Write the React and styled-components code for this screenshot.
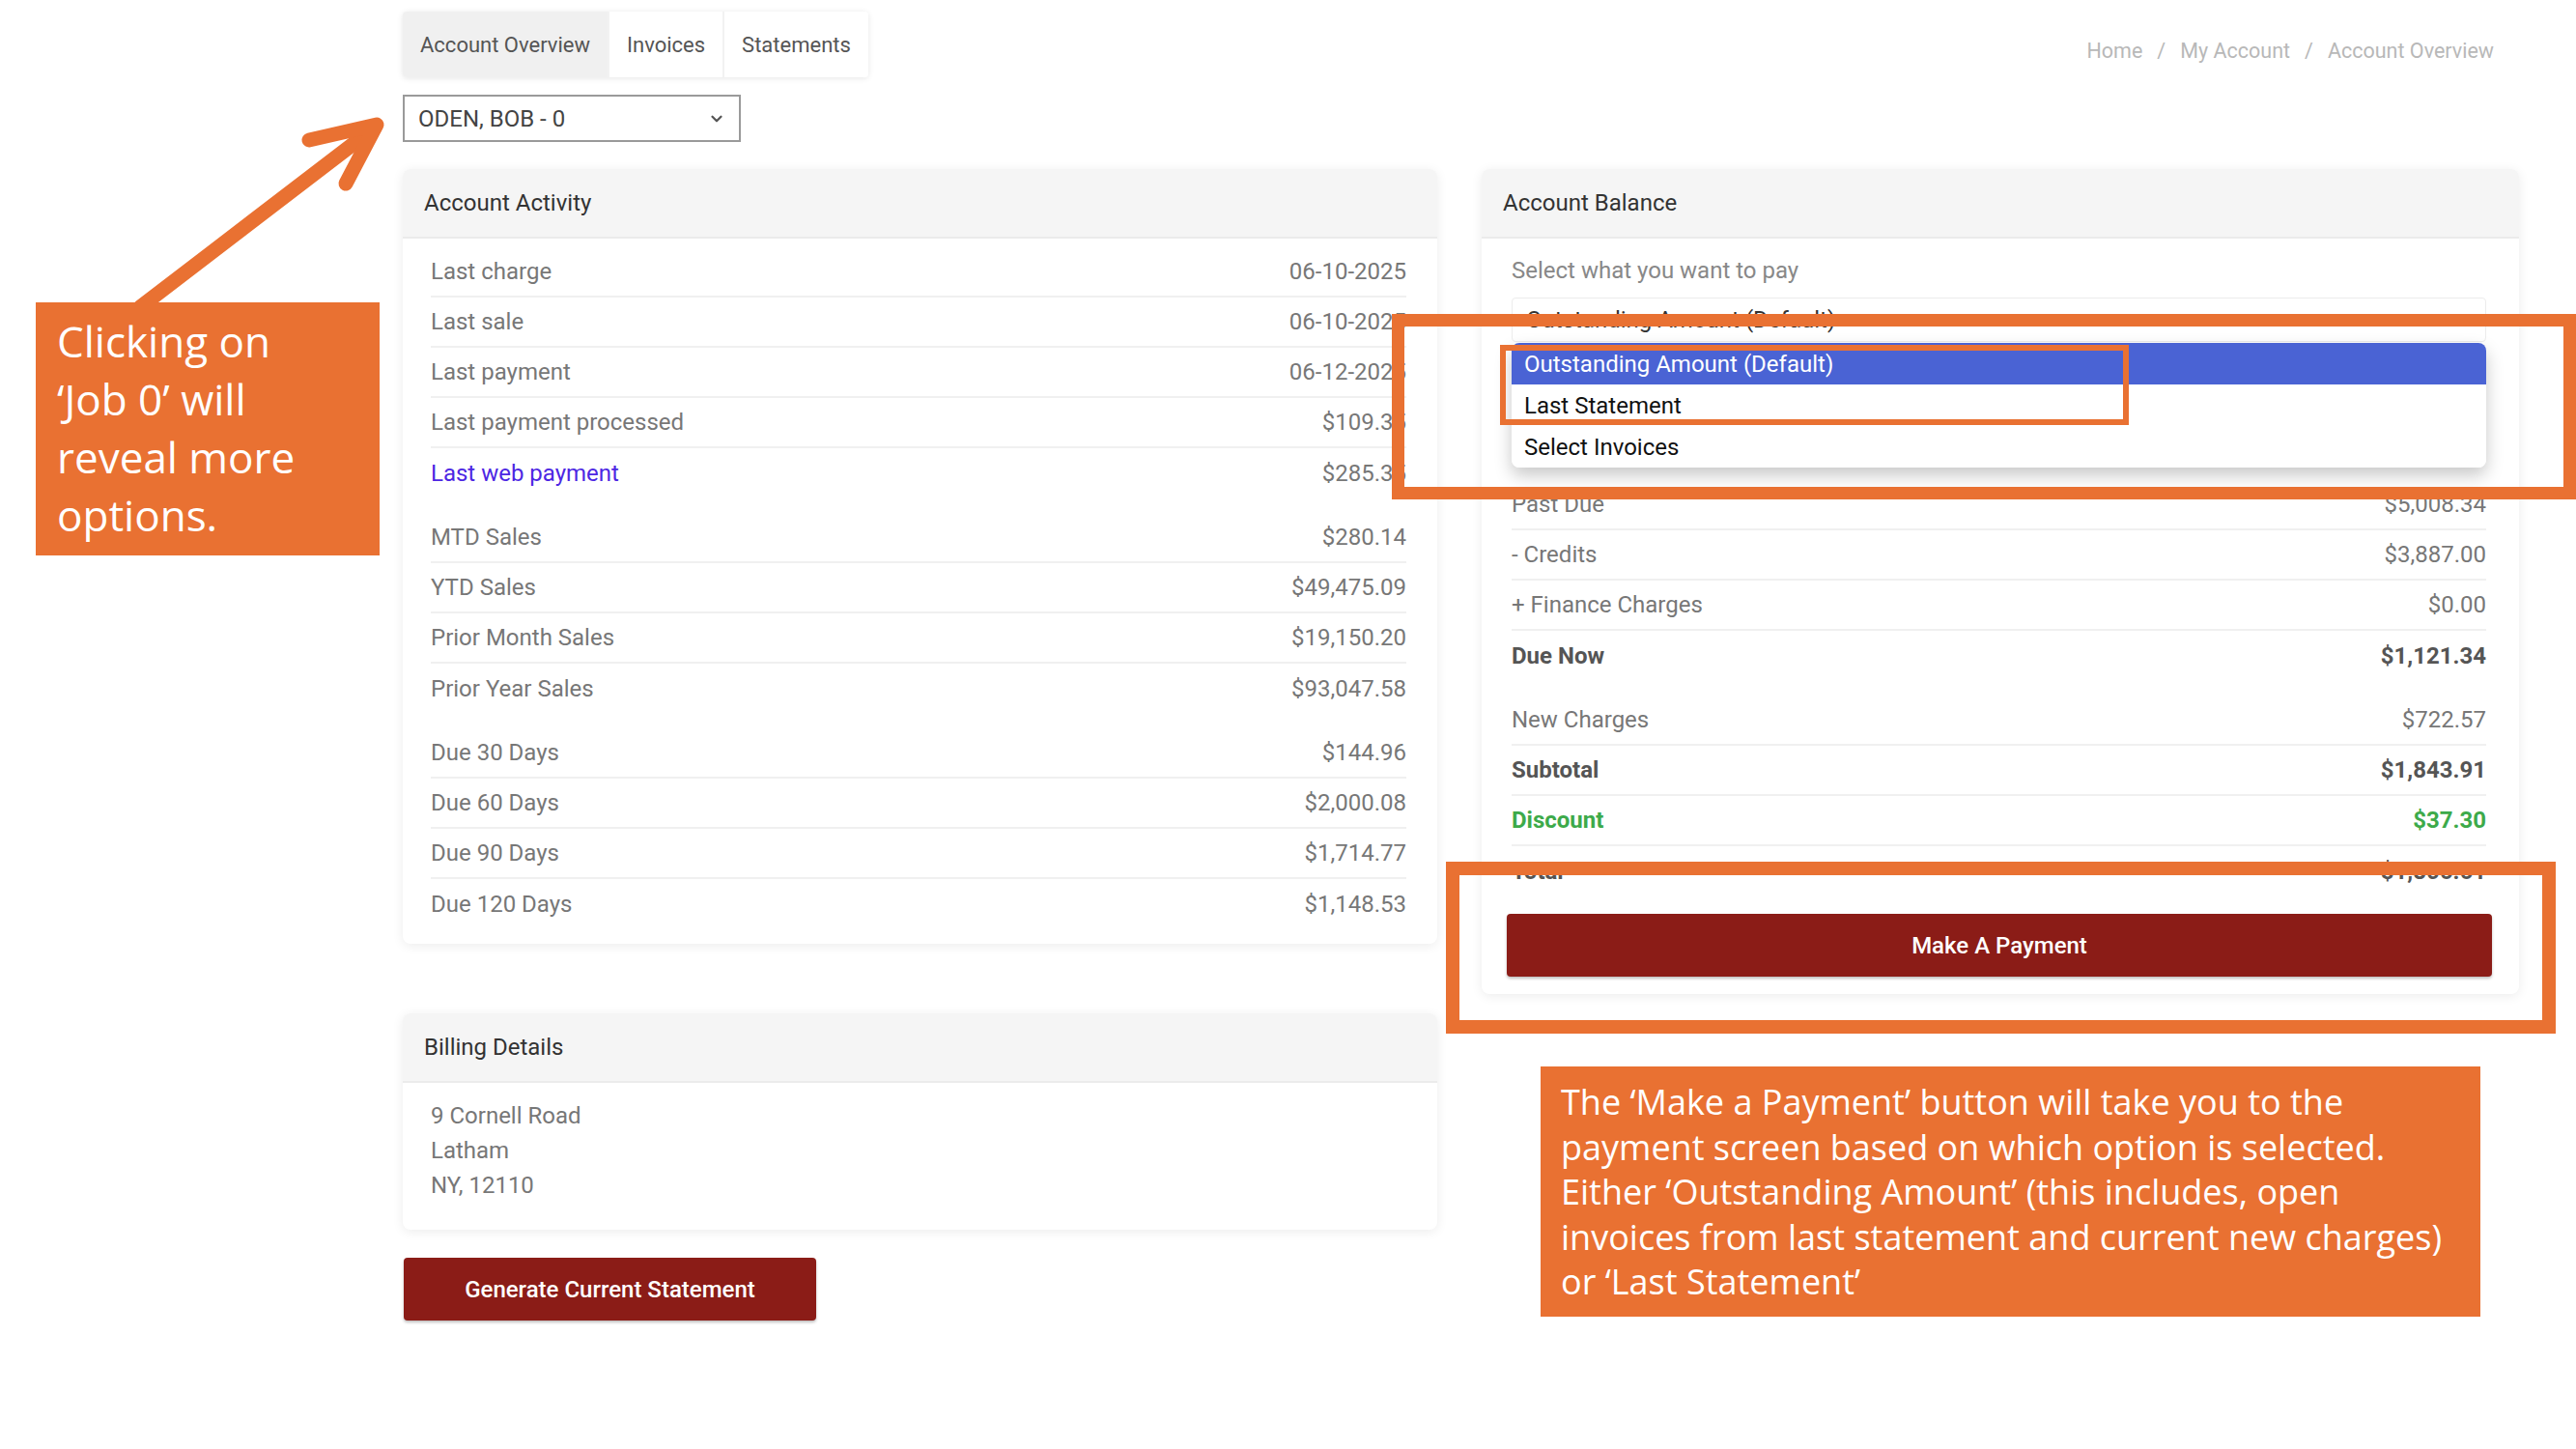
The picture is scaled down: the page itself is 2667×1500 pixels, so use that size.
import React from 'react';
import styled, { createGlobalStyle } from 'styled-components';
import { ChevronDown } from 'lucide-react';

const ORANGE = '#E97132';
const BRICK = '#8B1C17';

const GlobalStyle = createGlobalStyle`
  html, body {
    margin: 0;
    padding: 0;
    background: #ffffff;
  }
  body {
    font-family: Roboto, 'Liberation Sans', Arial, sans-serif;
  }
  * {
    box-sizing: border-box;
  }
`;

const Page = styled.div`
  position: relative;
  width: 2667px;
  height: 1500px;
  overflow: hidden;
  background: #ffffff;
`;

const Main = styled.div`
  width: 2608px;
  padding: 12px 0 0 417px;
`;

const TopBar = styled.div`
  display: flex;
  justify-content: space-between;
  align-items: flex-start;
`;

const TopLeft = styled.div`
  display: flex;
  flex-direction: column;
  gap: 18px;
`;

const Tabs = styled.div`
  display: flex;
  align-self: flex-start;
  background: #fff;
  border-radius: 4px;
  box-shadow: 0 1px 6px rgba(0, 0, 0, 0.1);
  overflow: hidden;
`;

const Tab = styled.div`
  height: 68px;
  padding: 0 18px;
  display: flex;
  align-items: center;
  font-size: 22px;
  color: #555;
  background: ${(p) => (p.$active ? '#f0f0f0' : '#ffffff')};
  border-right: 2px solid #f2f2f2;
  &:last-child {
    border-right: none;
  }
`;

const AccountSelect = styled.div`
  width: 350px;
  height: 49px;
  border: 2px solid #9a9a9a;
  padding: 0 14px;
  display: flex;
  align-items: center;
  justify-content: space-between;
  font-size: 24px;
  color: #444;
`;

const Breadcrumb = styled.div`
  display: flex;
  gap: 15px;
  margin: 28px 26px 0 0;
  font-size: 21.5px;
  color: #b8b8b8;
`;

const Columns = styled.div`
  display: grid;
  grid-template-columns: 1071px 1074px;
  column-gap: 46px;
  align-items: start;
  margin-top: 28px;
`;

const Column = styled.div`
  display: flex;
  flex-direction: column;
`;

const Card = styled.div`
  background: #fff;
  border-radius: 8px;
  box-shadow: 0 2px 12px rgba(0, 0, 0, 0.08);
  overflow: hidden;
  margin-top: ${(p) => p.$gap || 0}px;
`;

const CardHeader = styled.div`
  height: 72px;
  padding-left: 22px;
  display: flex;
  align-items: center;
  background: #f5f5f5;
  border-bottom: 2px solid #ebebeb;
  font-size: 24px;
  color: #333;
`;

const ActivityBody = styled.div`
  padding: 9px 32px 15px 29px;
`;

const BalanceBody = styled.div`
  padding: 0 28px 18px 26px;
`;

const RowGroup = styled.div`
  & + & {
    margin-top: 15px;
  }
`;

const Row = styled.div`
  height: 52px;
  display: flex;
  justify-content: space-between;
  align-items: center;
  border-bottom: 2px solid #f0f0f0;
  font-size: 24px;
  color: ${(p) => (p.$tone === 'strong' ? '#555' : p.$tone === 'discount' ? '#3daa4a' : '#777')};
  font-weight: ${(p) => (p.$tone === 'strong' || p.$tone === 'discount' ? 700 : 400)};
  margin: ${(p) => (p.$inset ? '0 6px 0 5px' : '0')};
  &:last-child {
    border-bottom: none;
  }
`;

const Label = styled.span`
  color: ${(p) => (p.$link ? '#4d27e3' : 'inherit')};
`;

const PayLabel = styled.div`
  margin: 20px 0 0 5px;
  line-height: 26px;
  font-size: 24px;
  color: #888;
`;

const PaySelectWrap = styled.div`
  position: relative;
  margin: 15px 6px 143px 5px;
`;

const PaySelect = styled.div`
  height: 46px;
  border: 1px solid #ececec;
  border-radius: 4px;
  padding: 0 14px;
  display: flex;
  align-items: center;
  justify-content: space-between;
  font-size: 24px;
  color: #333;
`;

const OptionList = styled.div`
  position: absolute;
  top: calc(100% + 1px);
  left: 0;
  right: 0;
  background: #fff;
  border-radius: 8px;
  box-shadow: 0 8px 18px rgba(0, 0, 0, 0.22);
  overflow: hidden;
  z-index: 2;
`;

const Option = styled.div`
  height: 43px;
  padding-left: 13px;
  display: flex;
  align-items: center;
  font-size: 24px;
  color: ${(p) => (p.$selected ? '#ffffff' : '#111')};
  background: ${(p) => (p.$selected ? '#4a63d4' : '#ffffff')};
`;

const BillingBody = styled.div`
  padding: 16px 31px 28px 29px;
  font-size: 24px;
  line-height: 36px;
  color: #777;
`;

const RedButton = styled.button`
  display: block;
  height: 65px;
  width: ${(p) => (p.$full ? '100%' : '427px')};
  margin-top: ${(p) => p.$gap}px;
  margin-left: ${(p) => (p.$full ? 0 : 1)}px;
  border: none;
  border-radius: 4px;
  background: ${BRICK};
  box-shadow: 0 2px 3px rgba(0, 0, 0, 0.25);
  color: #fff;
  font-family: Roboto, 'Liberation Sans', Arial, sans-serif;
  font-size: 24px;
  font-weight: 500;
`;

/* annotation layer */

const Callout = styled.div`
  position: absolute;
  left: ${(p) => p.$x}px;
  top: ${(p) => p.$y}px;
  width: ${(p) => p.$w}px;
  height: ${(p) => p.$h}px;
  background: ${ORANGE};
  color: #fff;
  font-family: 'Open Sans', Lato, sans-serif;
  font-size: ${(p) => p.$size}px;
  line-height: ${(p) => p.$lh}px;
  padding: ${(p) => p.$pad};
  white-space: nowrap;
  z-index: 5;
`;

const Frame = styled.div`
  position: absolute;
  left: ${(p) => p.$x}px;
  top: ${(p) => p.$y}px;
  width: ${(p) => p.$w}px;
  height: ${(p) => p.$h}px;
  border: ${(p) => p.$stroke}px solid ${ORANGE};
  z-index: 5;
`;

const ArrowSvg = styled.svg`
  position: absolute;
  left: 0;
  top: 0;
  z-index: 5;
`;

const activity = [
  [
    { label: 'Last charge', value: '06-10-2025' },
    { label: 'Last sale', value: '06-10-2025' },
    { label: 'Last payment', value: '06-12-2025' },
    { label: 'Last payment processed', value: '$109.35' },
    { label: 'Last web payment', value: '$285.35', link: true },
  ],
  [
    { label: 'MTD Sales', value: '$280.14' },
    { label: 'YTD Sales', value: '$49,475.09' },
    { label: 'Prior Month Sales', value: '$19,150.20' },
    { label: 'Prior Year Sales', value: '$93,047.58' },
  ],
  [
    { label: 'Due 30 Days', value: '$144.96' },
    { label: 'Due 60 Days', value: '$2,000.08' },
    { label: 'Due 90 Days', value: '$1,714.77' },
    { label: 'Due 120 Days', value: '$1,148.53' },
  ],
];

const balance = [
  [
    { label: 'Past Due', value: '$5,008.34' },
    { label: '- Credits', value: '$3,887.00' },
    { label: '+ Finance Charges', value: '$0.00' },
    { label: 'Due Now', value: '$1,121.34', tone: 'strong' },
  ],
  [
    { label: 'New Charges', value: '$722.57' },
    { label: 'Subtotal', value: '$1,843.91', tone: 'strong' },
    { label: 'Discount', value: '$37.30', tone: 'discount' },
    { label: 'Total', value: '$1,806.61', tone: 'strong' },
  ],
];

const payOptions = ['Outstanding Amount (Default)', 'Last Statement', 'Select Invoices'];

const App = () => {
  return (
    <Page>
      <GlobalStyle />
      <Main>
        <TopBar>
          <TopLeft>
            <Tabs>
              <Tab $active>Account Overview</Tab>
              <Tab>Invoices</Tab>
              <Tab>Statements</Tab>
            </Tabs>
            <AccountSelect>
              ODEN, BOB - 0
              <ChevronDown size={18} strokeWidth={3} color='#555' />
            </AccountSelect>
          </TopLeft>
          <Breadcrumb>
            <span>Home</span>
            <span>/</span>
            <span>My Account</span>
            <span>/</span>
            <span>Account Overview</span>
          </Breadcrumb>
        </TopBar>

        <Columns>
          <Column>
            <Card>
              <CardHeader>Account Activity</CardHeader>
              <ActivityBody>
                {activity.map((group, gi) => (
                  <RowGroup key={gi}>
                    {group.map((r) => (
                      <Row key={r.label}>
                        <Label $link={r.link}>{r.label}</Label>
                        <span>{r.value}</span>
                      </Row>
                    ))}
                  </RowGroup>
                ))}
              </ActivityBody>
            </Card>

            <Card $gap={72}>
              <CardHeader>Billing Details</CardHeader>
              <BillingBody>
                9 Cornell Road
                <br />
                Latham
                <br />
                NY, 12110
              </BillingBody>
            </Card>

            <RedButton $gap={29}>Generate Current Statement</RedButton>
          </Column>

          <Column>
            <Card>
              <CardHeader>Account Balance</CardHeader>
              <BalanceBody>
                <PayLabel>Select what you want to pay</PayLabel>
                <PaySelectWrap>
                  <PaySelect>
                    Outstanding Amount (Default)
                    <ChevronDown size={16} strokeWidth={2} color='#666' />
                  </PaySelect>
                  <OptionList>
                    {payOptions.map((o, i) => (
                      <Option key={o} $selected={i === 0}>
                        {o}
                      </Option>
                    ))}
                  </OptionList>
                </PaySelectWrap>
                {balance.map((group, gi) => (
                  <RowGroup key={gi}>
                    {group.map((r) => (
                      <Row key={r.label} $inset $tone={r.tone}>
                        <span>{r.label}</span>
                        <span>{r.value}</span>
                      </Row>
                    ))}
                  </RowGroup>
                ))}
                <RedButton $full $gap={18}>
                  Make A Payment
                </RedButton>
              </BalanceBody>
            </Card>
          </Column>
        </Columns>
      </Main>

      {/* annotations */}
      <ArrowSvg width='420' height='330' viewBox='0 0 420 330'>
        <g stroke={ORANGE} strokeWidth='15' strokeLinecap='round' strokeLinejoin='round' fill='none'>
          <line x1='145' y1='318' x2='388' y2='132' />
          <polyline points='320,145 390,129 358,190' />
        </g>
      </ArrowSvg>
      <Callout $x={37} $y={313} $w={356} $h={262} $size={44} $lh={60} $pad='10px 0 0 22px'>
        Clicking on
        <br />
        ‘Job 0’ will
        <br />
        reveal more
        <br />
        options.
      </Callout>

      <Frame $x={1441} $y={325} $w={1226} $h={192} $stroke={13} />
      <Frame $x={1553} $y={357} $w={651} $h={83} $stroke={6} />
      <Frame $x={1497} $y={892} $w={1149} $h={178} $stroke={14} />

      <Callout $x={1595} $y={1104} $w={973} $h={259} $size={36} $lh={46.6} $pad='14px 0 0 21px'>
        The ‘Make a Payment’ button will take you to the
        <br />
        payment screen based on which option is selected.
        <br />
        Either ‘Outstanding Amount’ (this includes, open
        <br />
        invoices from last statement and current new charges)
        <br />
        or ‘Last Statement’
      </Callout>
    </Page>
  );
};

export default App;
